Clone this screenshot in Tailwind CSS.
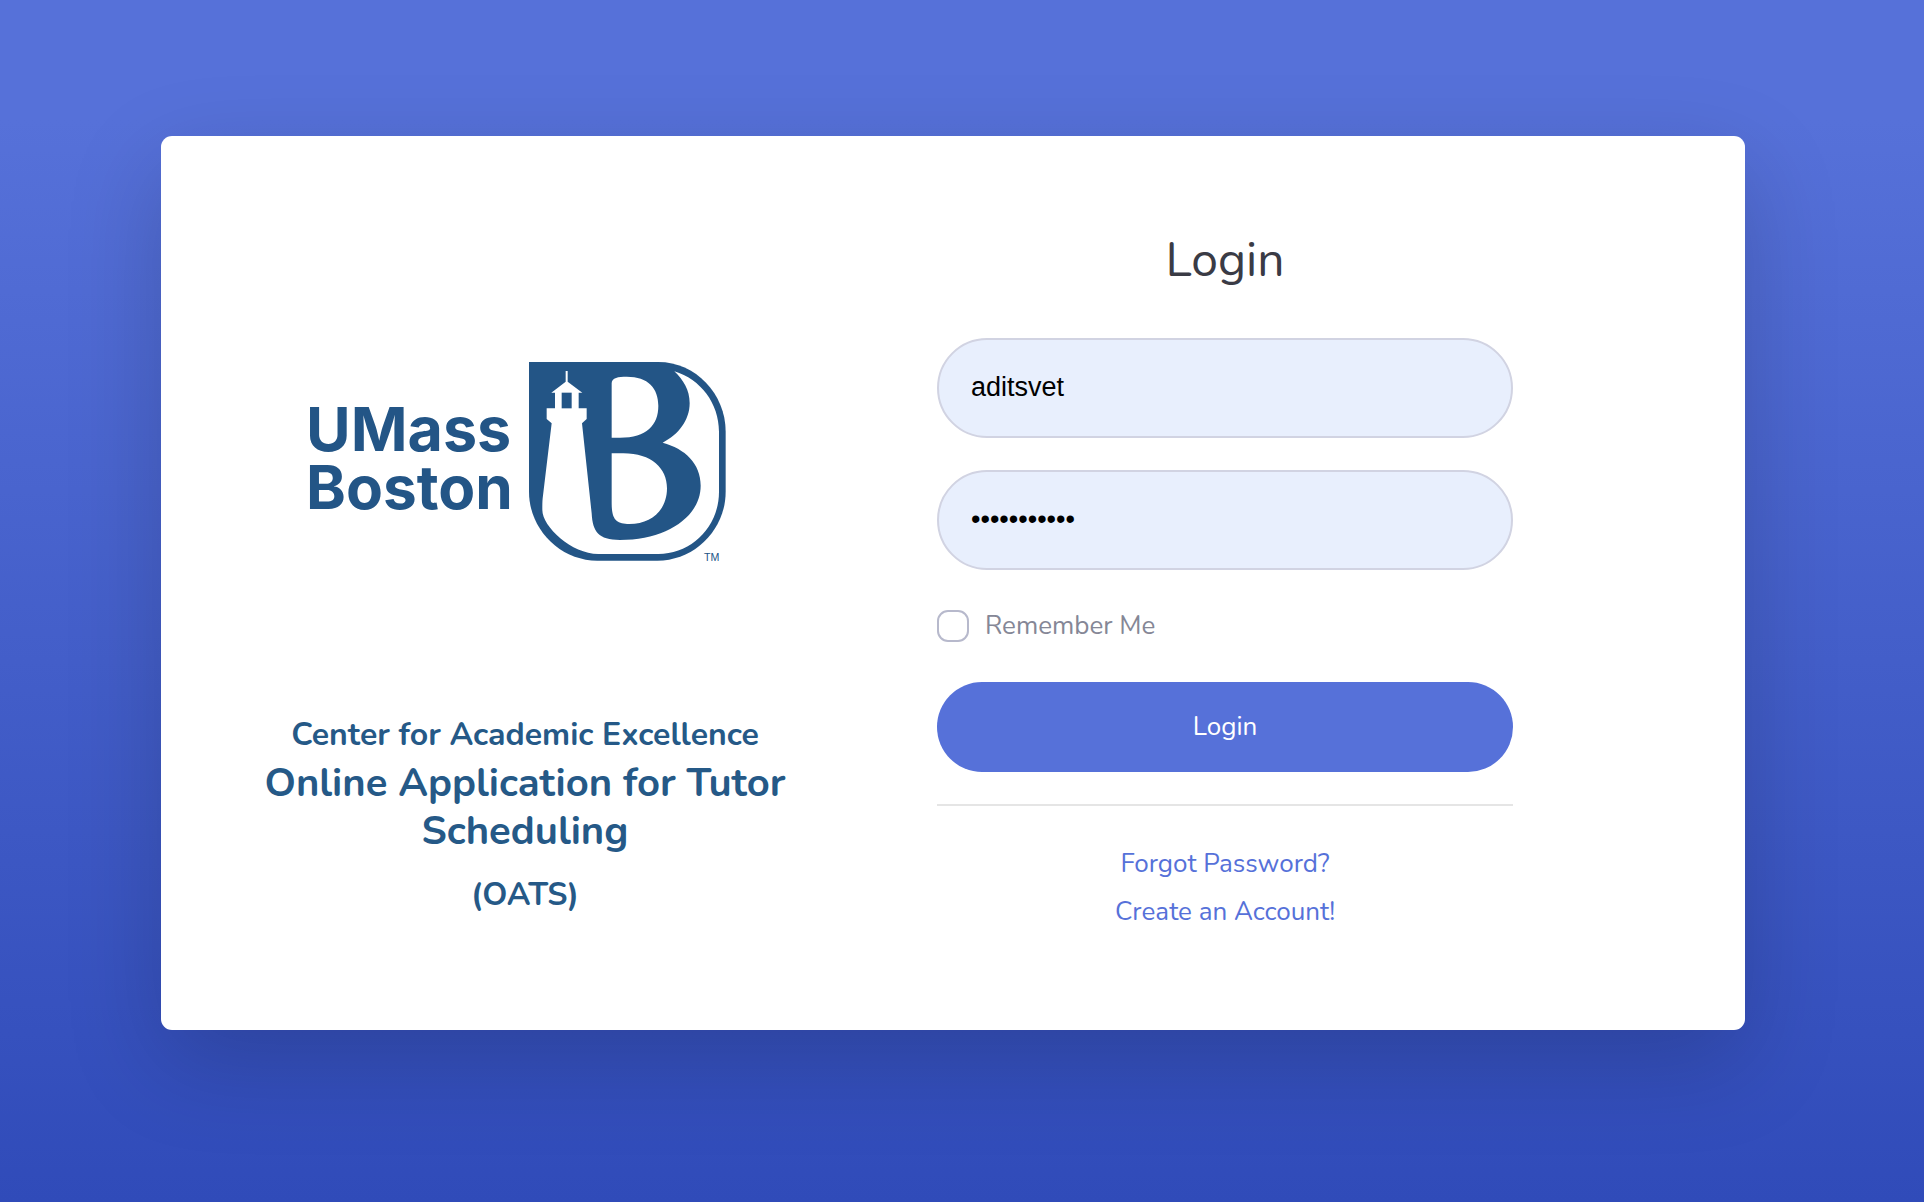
<!DOCTYPE html>
<html lang="en">
<head>
<meta charset="utf-8">
<title>OATS - Login</title>
<script src="https://cdn.jsdelivr.net/npm/@tailwindcss/browser@4"></script>
</head>
<body class="min-h-screen bg-[linear-gradient(180deg,#5671d9_10%,#304bb9_100%)] pt-[136px] pr-[18px] pb-24 font-[Nunito,Lato,sans-serif] text-[26px] leading-[48px]">
<main class="mx-auto w-full max-w-[1584px] rounded-[11px] bg-white shadow-[0_32px_96px_rgba(0,0,0,0.175)]">
  <div class="grid grid-cols-[536fr_576fr] gap-36 pt-[95px] pr-[232px] pb-[94px] pl-24">
    <section class="flex flex-col items-center pt-[129px] text-center font-bold text-[#255987]">
      <svg class="mr-5 h-[202px] w-[424px] overflow-visible" viewBox="39 60 1272 606" role="img" aria-label="UMass Boston">
        <g fill="#235586" font-family="Inter, sans-serif" font-weight="700" font-size="181">
          <text x="48" y="334" font-size="183">UMass</text>
          <text x="48" y="508">Boston</text>
        </g>
        <path fill="#235586" d="M717 66H1105C1217 66 1307 162 1307 275V455C1307 568 1215 662 1102 662H922C810 662 717 568 717 455Z"/>
        <path fill="#fff" d="M1153 94C1232 118 1287 190 1287 275V455C1287 560 1205 642 1105 642H925C845 642 757 560 757 510C757 495 757 485 758 475L785 250L770 237V205H795V158H784L827 125V93H833V125L877 158H866V205H890V237L876 250L905 520C908 575 925 600 990 600C1130 600 1232 530 1232 437C1232 370 1185 326 1118 308C1165 285 1199 240 1199 190C1199 150 1180 120 1153 94Z"/>
        <path fill="#235586" d="M815 158H845V205H815Z"/>
        <path fill="#fff" d="M965 293V130C965 113 985 110 1010 110C1075 110 1105 145 1105 197C1105 255 1070 293 990 293ZM965 340H1000C1085 340 1131 385 1131 445C1131 510 1085 552 1018 552C980 552 965 540 965 490Z"/>
        <text x="1242" y="662" fill="#235586" font-family="Liberation Sans, sans-serif" font-weight="400" font-size="32">TM</text>
      </svg>
      <h2 class="mt-[154px] text-[32px] leading-[38px]">Center for Academic Excellence</h2>
      <h1 class="mt-[5px] text-[40px] leading-[48px]">Online Application for Tutor Scheduling</h1>
      <h2 class="mt-4 text-[32px] leading-[48px]">(OATS)</h2>
    </section>
    <section>
      <h1 class="mb-[49px] text-center text-[48px] leading-[58px] text-[#3a3b45]">Login</h1>
      <form onsubmit="return false">
        <input type="text" aria-label="Username" value="aditsvet" class="block h-[100px] w-full rounded-full border-2 border-[#d1d3e2] bg-[#e8effd] px-8 pb-0.5 font-[Arial,'Liberation_Sans',sans-serif] text-[27px] text-black">
        <input type="password" aria-label="Password" value="abcdefghijk" class="mt-8 block h-[100px] w-full rounded-full border-2 border-[#d1d3e2] bg-[#e8effd] px-8 pb-0.5 font-[Arial,'Liberation_Sans',sans-serif] text-[27px] text-black">
        <label class="mt-8 flex items-center gap-4 text-[#858796]">
          <input type="checkbox" class="size-8 appearance-none rounded-[11px] border-2 border-[#b7b9cc] bg-white">
          Remember Me
        </label>
        <button type="submit" class="mt-8 block h-[90px] w-full rounded-full bg-[#5671d9] text-white">Login</button>
      </form>
      <hr class="mt-8 mb-[34px] border-t-2 border-black/10">
      <nav class="flex flex-col items-center text-[#5671d9]">
        <a href="#">Forgot Password?</a>
        <a href="#">Create an Account!</a>
      </nav>
    </section>
  </div>
</main>
</body>
</html>
